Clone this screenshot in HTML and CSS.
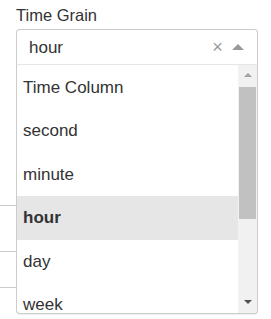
FILE: index.html
```html
<!DOCTYPE html>
<html>
<head>
<meta charset="utf-8">
<title>Time Grain</title>
<link rel="stylesheet" href="styles.css">
</head>
<body>
<div class="field">
  <label class="field-label">Time Grain</label>
  <div class="select">
    <div class="select-control">
      <span class="select-value">hour</span>
      <span class="select-clear" title="Clear value">&times;</span>
      <span class="select-arrow-zone"><span class="select-arrow"></span></span>
    </div>
    <div class="select-menu">
      <div class="menu-list">
        <div class="menu-option">Time Column</div>
        <div class="menu-option">second</div>
        <div class="menu-option">minute</div>
        <div class="menu-option is-focused">hour</div>
        <div class="menu-option">day</div>
        <div class="menu-option">week</div>
      </div>
      <div class="scrollbar">
        <div class="scroll-btn"><span class="tri-up"></span></div>
        <div class="scroll-thumb"></div>
        <div class="scroll-rest"></div>
        <div class="scroll-btn scroll-btn-down"><span class="tri-down"></span></div>
      </div>
    </div>
  </div>
</div>

<div class="backdrop">
  <div class="rule rule-1"></div>
  <div class="rule rule-2"></div>
  <div class="rule rule-3"></div>
</div>
</body>
</html>
```

FILE: styles.css
```css
html, body
{
	margin:0;
	padding:0;
	background-color:white;
	font-family:"Liberation Sans", Arial, sans-serif;
	color:#333;
}
body
{
	height:319px;
	overflow:hidden;
}
.field
{
	padding:5px 13px 0 16px;
	position:relative;
	z-index:2;
}
.field-label
{
	display:block;
	font-size:16.5px;
	line-height:20px;
	margin-bottom:4px;
}
.select
{
	position:relative;
	width:242px;
}
.select-control
{
	box-sizing:border-box;
	height:36px;
	display:flex;
	align-items:center;
	border:1px solid #ccc;
	border-bottom-color:#e6e6e6;
	border-radius:4px 4px 0 0;
	background-color:white;
	padding:2px 0 0 12px;
}
.select-value
{
	flex:1;
	font-size:17px;
	color:#333;
}
.select-clear
{
	width:17px;
	text-align:center;
	font-size:18px;
	line-height:1;
	color:#999;
	margin-top:-3px;
	margin-right:6px;
}
.select-arrow-zone
{
	display:flex;
	align-items:center;
	padding-right:13px;
	margin-top:-3px;
}
.select-arrow
{
	width:0;
	height:0;
	border-style:solid;
	border-width:0 6px 6px;
	border-color:transparent transparent #999;
}
.select-menu
{
	position:absolute;
	top:100%;
	left:0;
	box-sizing:border-box;
	width:242px;
	height:249px;
	display:flex;
	background-color:white;
	border:1px solid #ccc;
	border-top:none;
	border-radius:0 0 4px 4px;
	box-shadow:0 1px 0 rgba(0,0,0,.06);
	overflow:hidden;
}
.menu-list
{
	flex:1;
	overflow:hidden;
	padding-top:1px;
}
.menu-option
{
	font-size:17px;
	line-height:19.4px;
	padding:12px 6px;
	color:#333;
	white-space:nowrap;
}
.menu-option.is-focused
{
	background-color:#e6e6e6;
	font-weight:bold;
}
.scrollbar
{
	width:19px;
	display:flex;
	flex-direction:column;
	background-color:#f1f1f1;
}
.scroll-btn
{
	height:21px;
	display:flex;
	align-items:center;
	justify-content:center;
}
.scroll-btn-down
{
	height:20px;
}
.tri-up
{
	width:0;
	height:0;
	border-style:solid;
	border-width:0 4px 4px;
	border-color:transparent transparent #a3a3a3;
	margin-top:-1px;
}
.tri-down
{
	width:0;
	height:0;
	border-style:solid;
	border-width:4px 4px 0;
	border-color:#505050 transparent transparent;
	margin-top:-2px;
}
.scroll-thumb
{
	height:132px;
	margin:1px 1px 0 1px;
	background-color:#c1c1c1;
}
.scroll-rest
{
	flex:1;
}
.backdrop
{
	padding-top:140px;
}
.rule
{
	height:1px;
	background-color:#ccc;
	width:20px;
}
.rule-2
{
	margin-top:45px;
}
.rule-3
{
	margin-top:35px;
}
```
